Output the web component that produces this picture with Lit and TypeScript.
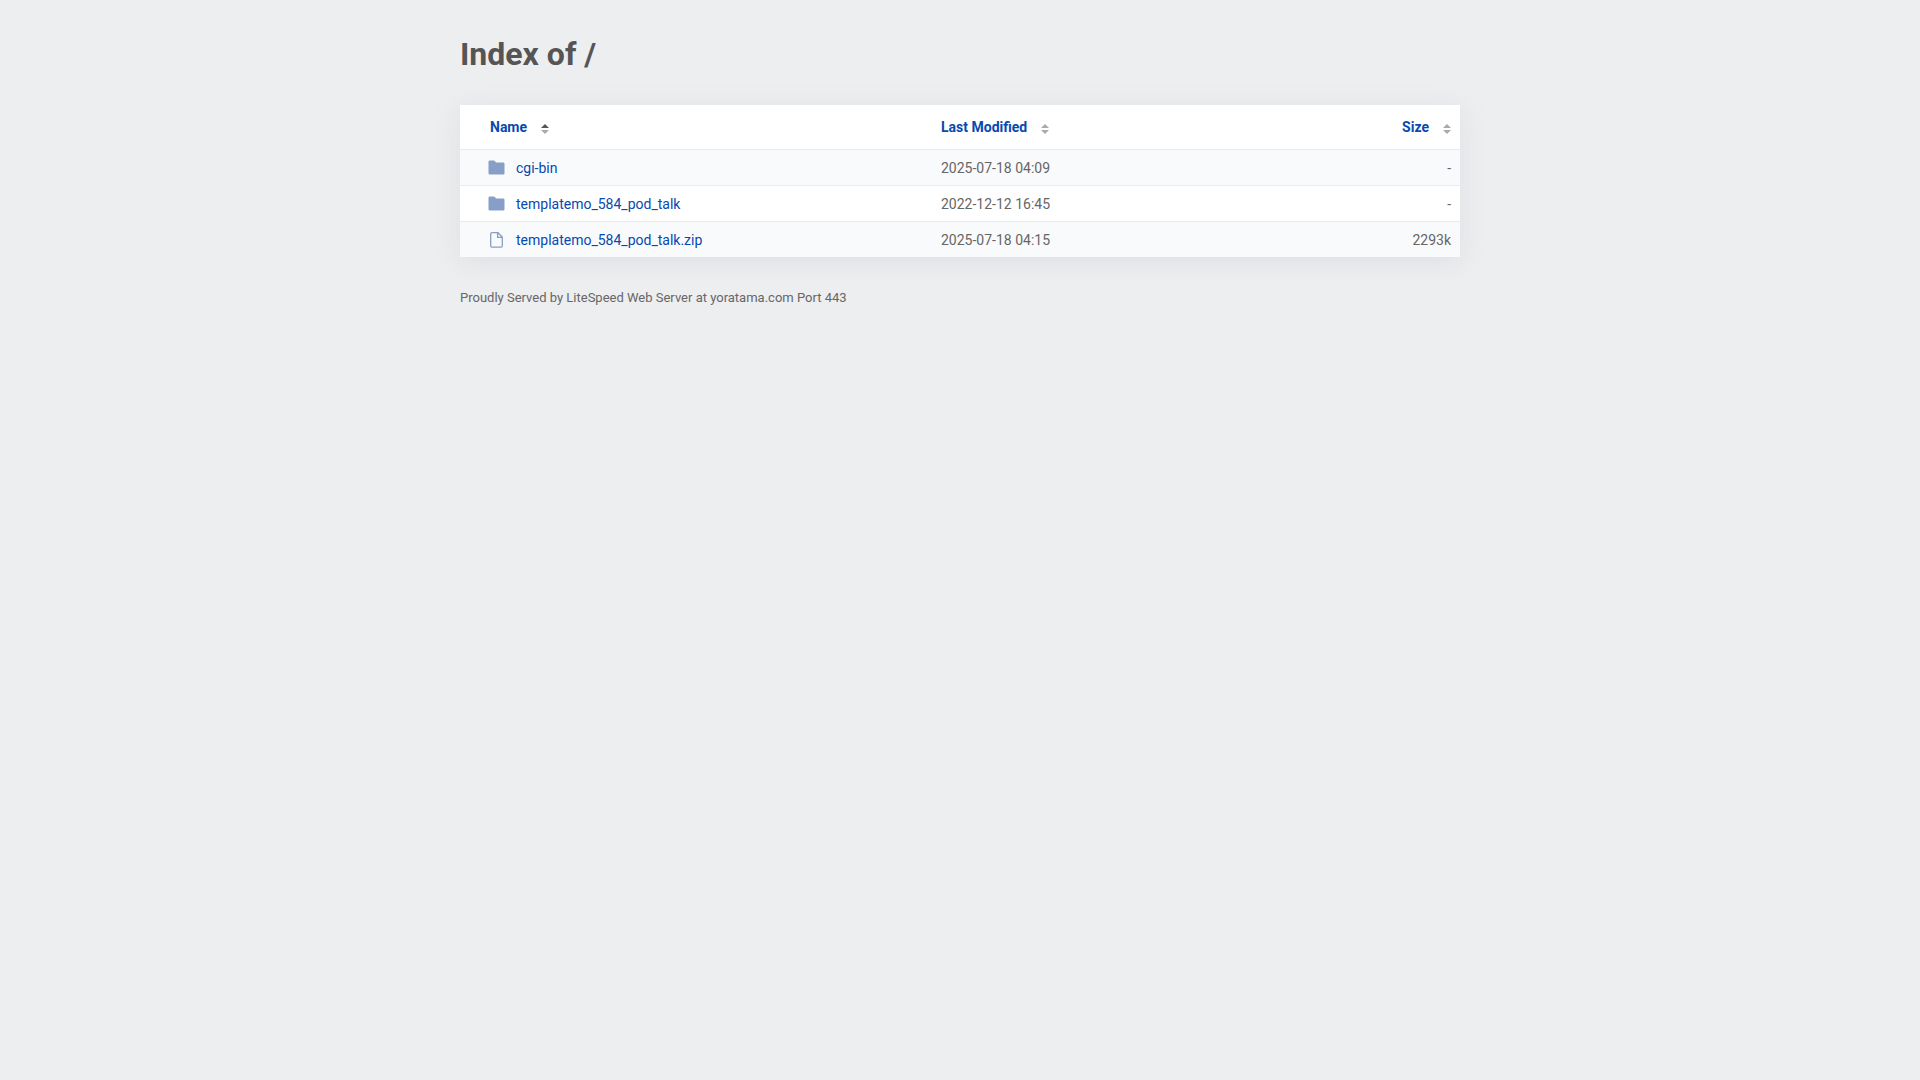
import { LitElement, html, css, svg } from "lit";
import { customElement, state } from "lit/decorators.js";

type SortKey = "name" | "modified" | "size";

interface Entry {
  name: string;
  modified: string;
  size: string;
  folder: boolean;
}

const ENTRIES: Entry[] = [
  { name: "cgi-bin", modified: "2025-07-18 04:09", size: "-", folder: true },
  { name: "templatemo_584_pod_talk", modified: "2022-12-12 16:45", size: "-", folder: true },
  { name: "templatemo_584_pod_talk.zip", modified: "2025-07-18 04:15", size: "2293k", folder: false },
];

const COLUMNS: { key: SortKey; label: string }[] = [
  { key: "name", label: "Name" },
  { key: "modified", label: "Last Modified" },
  { key: "size", label: "Size" },
];

const folderShape = svg`<path d="M2 .5h3.600c.5 0 .8.1 1.100.5l.9 1.100c.3.3.5.4 1 .4h6.400c1 0 1.500.5 1.500 1.500v9c0 1-.5 1.500-1.500 1.500H2c-1 0-1.500-.5-1.500-1.500V2C.5 1 1 .5 2 .5z" fill="currentColor"/>`;

const fileShape = svg`<path d="M4 .7h6l4.300 4.300v8.800c0 .9-.4 1.400-1.300 1.400H4c-.9 0-1.300-.5-1.300-1.400V2.100C2.700 1.200 3.100.7 4 .7zM9.600.9v4.500h4.500" fill="none" stroke="currentColor" stroke-width="1.300"/>`;

@customElement("app-root")
export class AppRoot extends LitElement {
  static styles = css`
    :host {
      display: block;
      box-sizing: border-box;
      min-height: 100vh;
      padding: 32px 16px;
      background: #edeef0;
      color: #666;
      font-family: Roboto, "Liberation Sans", sans-serif;
      font-size: 14px;
      line-height: 20px;
    }
    .page {
      max-width: 1000px;
      margin: 0 auto;
    }
    .title {
      margin: 0 0 29px;
      color: #555;
      font-size: 32px;
      line-height: 44px;
      font-weight: 700;
    }
    .listing {
      width: 100%;
      table-layout: fixed;
      border-collapse: separate;
      border-spacing: 0;
      background: #fff;
      box-shadow: 0 5px 25px rgba(154, 172, 176, 0.2);
    }
    .col-name {
      width: 47.2%;
    }
    .col-size {
      width: 14%;
    }
    .head {
      height: 44px;
      padding: 0 9px;
      text-align: left;
      font-weight: 700;
    }
    .head.name {
      padding-left: 30px;
    }
    .cell {
      height: 35px;
      padding: 0 9px;
      border-top: 1px solid #e9ebed;
    }
    .cell.name {
      padding-left: 28px;
    }
    .size {
      text-align: right;
    }
    .row:nth-child(odd) {
      background: #f9fafc;
    }
    .sort {
      display: inline-flex;
      align-items: center;
      gap: 14px;
      padding: 0;
      border: 0;
      background: none;
      color: #0649b0;
      font: inherit;
      cursor: pointer;
    }
    .arrows {
      width: 8px;
      height: 10px;
      margin-top: 3px;
      color: #aaa;
    }
    .up.active,
    .down.active {
      color: #555;
    }
    .link {
      display: flex;
      align-items: center;
      gap: 11px;
      padding-top: 1px;
      color: #0649b0;
      text-decoration: none;
    }
    .link:hover {
      text-decoration: underline;
    }
    .icon {
      width: 17px;
      height: 16px;
      color: #879fc6;
    }
    .footer {
      margin-top: 31px;
      font-size: 13px;
    }
  `;

  @state() private sortKey: SortKey = "name";
  @state() private ascending = true;

  private sortBy(key: SortKey) {
    this.ascending = this.sortKey === key ? !this.ascending : true;
    this.sortKey = key;
  }

  private get rows() {
    const value = (e: Entry) => (this.sortKey === "size" ? parseInt(e.size) || 0 : e[this.sortKey]);
    const sign = this.ascending ? 1 : -1;
    return [...ENTRIES].sort((a, b) => {
      const x = value(a);
      const y = value(b);
      return x === y ? 0 : x < y ? -sign : sign;
    });
  }

  private renderHead(column: { key: SortKey; label: string }) {
    const active = this.sortKey === column.key;
    const order = this.ascending ? "ascending" : "descending";
    return html`<th class="head ${column.key}" scope="col" aria-sort=${active ? order : "none"}>
      <button class="sort" type="button" @click=${() => this.sortBy(column.key)}>
        ${column.label}
        <svg class="arrows" viewBox="0 0 8 10" aria-hidden="true">
          <path class="up ${active && this.ascending ? "active" : ""}" d="M0 4l4-4 4 4z" fill="currentColor" />
          <path class="down ${active && !this.ascending ? "active" : ""}" d="M0 6h8l-4 4z" fill="currentColor" />
        </svg>
      </button>
    </th>`;
  }

  render() {
    return html`<main class="page">
      <h1 class="title">Index of /</h1>
      <table class="listing">
        <colgroup>
          <col class="col-name" />
          <col />
          <col class="col-size" />
        </colgroup>
        <thead>
          <tr>${COLUMNS.map((c) => this.renderHead(c))}</tr>
        </thead>
        <tbody>
          ${this.rows.map(
            (e) => html`<tr class="row">
              <td class="cell name">
                <a class="link" href="/${e.name}${e.folder ? "/" : ""}">
                  <svg class="icon" viewBox="0 0 17 16" aria-hidden="true">${e.folder ? folderShape : fileShape}</svg>
                  <span>${e.name}</span>
                </a>
              </td>
              <td class="cell">${e.modified}</td>
              <td class="cell size">${e.size}</td>
            </tr>`
          )}
        </tbody>
      </table>
      <footer class="footer">Proudly Served by LiteSpeed Web Server at yoratama.com Port 443</footer>
    </main>`;
  }
}
